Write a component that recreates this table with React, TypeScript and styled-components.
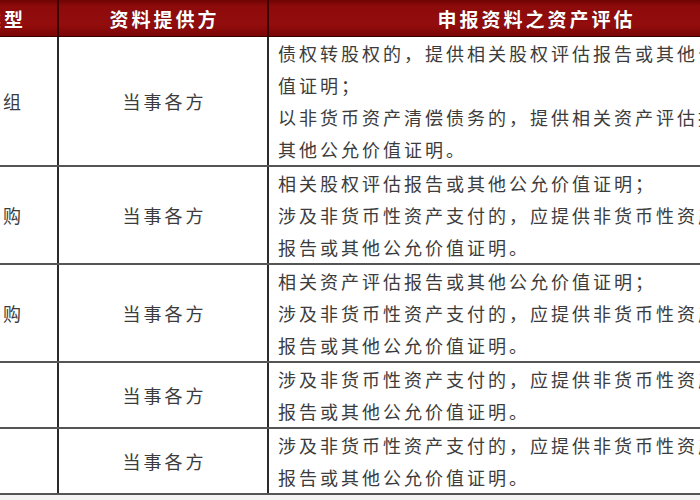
import styled, { createGlobalStyle } from "styled-components";

interface Row {
  type: string;
  provider: string;
  items: string[];
}

const rows: Row[] = [
  {
    type: "债务重组",
    provider: "当事各方",
    items: [
      "债权转股权的，提供相关股权评估报告或其他公允价值证明；",
      "以非货币资产清偿债务的，提供相关资产评估报告或其他公允价值证明。",
    ],
  },
  {
    type: "股权收购",
    provider: "当事各方",
    items: [
      "相关股权评估报告或其他公允价值证明；",
      "涉及非货币性资产支付的，应提供非货币性资产评估报告或其他公允价值证明。",
    ],
  },
  {
    type: "资产收购",
    provider: "当事各方",
    items: [
      "相关资产评估报告或其他公允价值证明；",
      "涉及非货币性资产支付的，应提供非货币性资产评估报告或其他公允价值证明。",
    ],
  },
  {
    type: "合并",
    provider: "当事各方",
    items: ["涉及非货币性资产支付的，应提供非货币性资产评估报告或其他公允价值证明。"],
  },
  {
    type: "分立",
    provider: "当事各方",
    items: ["涉及非货币性资产支付的，应提供非货币性资产评估报告或其他公允价值证明。"],
  },
];

export default function App() {
  return (
    <>
      <GlobalStyle />
      <Frame>
        <Table>
          <colgroup>
            <col style={{ width: 154 }} />
            <col style={{ width: 210 }} />
            <col style={{ width: 534 }} />
          </colgroup>
          <thead>
            <tr>
              <HeadCell>重组类型</HeadCell>
              <HeadCell>资料提供方</HeadCell>
              <HeadCell>申报资料之资产评估</HeadCell>
            </tr>
          </thead>
          <tbody>
            {rows.map((row) => (
              <tr key={row.type}>
                <CenterCell>{row.type}</CenterCell>
                <CenterCell>{row.provider}</CenterCell>
                <TextCell>
                  {row.items.map((item) => (
                    <Item key={item}>{item}</Item>
                  ))}
                </TextCell>
              </tr>
            ))}
          </tbody>
        </Table>
      </Frame>
    </>
  );
}

const GlobalStyle = createGlobalStyle`
  html, body {
    margin: 0;
    padding: 0;
    background: #ffffff;
    overflow: hidden;
  }
  body {
    font-family: "Noto Sans CJK SC", "Noto Sans", sans-serif;
  }
`;

const Frame = styled.div`
  width: 700px;
  height: 500px;
  overflow: hidden;
  background: #f4f4f4;
`;

const Table = styled.table`
  margin-left: -96px;
  border-collapse: collapse;
  table-layout: fixed;
  width: 898px;
  background: #ffffff;
`;

const HeadCell = styled.th`
  height: 36px;
  padding: 0 0 0 3px;
  background: linear-gradient(to bottom, #6e0303 0%, #8e0b0b 18%, #930d0d 70%, #7a0505 100%);
  color: #ffffff;
  font-size: 19px;
  font-weight: 700;
  letter-spacing: 3px;
  text-align: center;
  border-right: 2px solid #3a0000;
  border-bottom: 1px solid #3a0000;
  text-shadow: 0 0 1px rgba(0, 0, 0, 0.4);
`;

const CenterCell = styled.td`
  padding: 0 0 0 3px;
  text-align: center;
  vertical-align: middle;
  color: #3c3c3c;
  font-size: 18px;
  letter-spacing: 3px;
  line-height: 32px;
  border-right: 2px solid #2a2a2a;
  border-bottom: 2px solid #555555;
`;

const TextCell = styled.td`
  padding: 0 30px 0 9px;
  vertical-align: top;
  color: #3c3c3c;
  font-size: 18px;
  letter-spacing: 3px;
  line-height: 32px;
  border-bottom: 2px solid #555555;
`;

const Item = styled.div`
  margin: 0;
`;
